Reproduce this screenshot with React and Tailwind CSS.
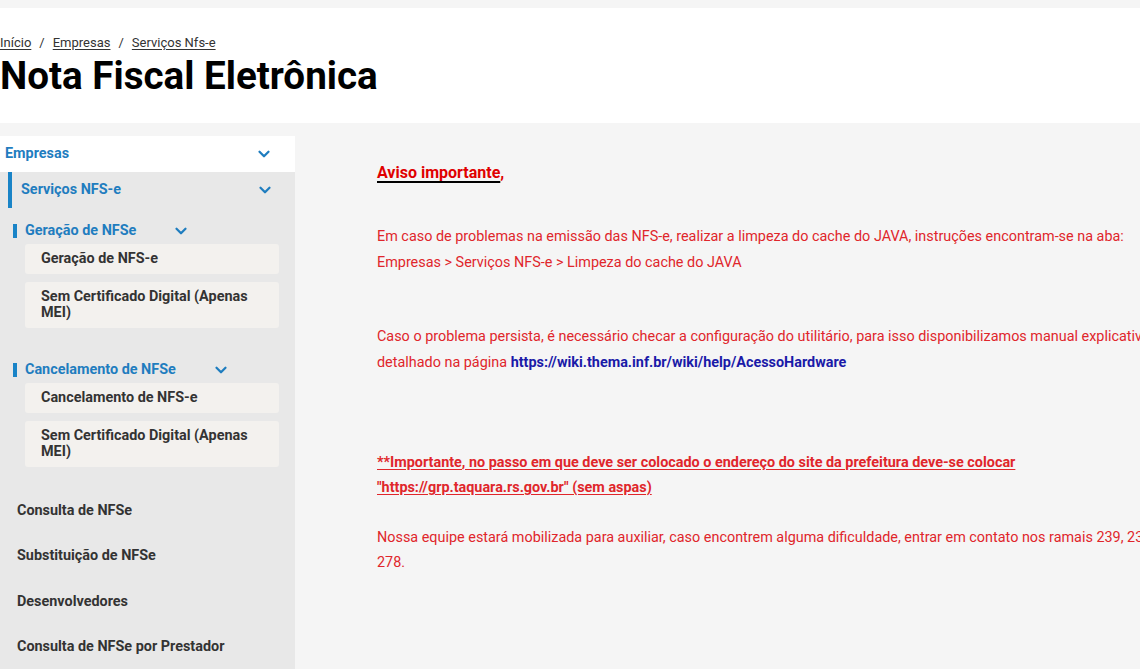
import { ChevronDown } from 'lucide-react';

const blue = 'text-[#1f7dbf]';

function Chevron({ className = '' }) {
  return <ChevronDown size={18} strokeWidth={3} className={`text-[#1f7dbf] ${className}`} />;
}

function SubGroup({ title, items }) {
  return (
    <div>
      <div className="ml-[13px] flex h-[18px] items-center">
        <span className="h-[14px] w-[4px] bg-[#1a84c7]" />
        <span className={`ml-[8px] text-[14.4px] font-bold ${blue}`}>{title}</span>
        <Chevron className="ml-[36px]" />
      </div>
      <div className="ml-[25px] mt-[4px] flex w-[254px] flex-col gap-[8px]">
        {items.map((label) => (
          <div key={label} className="rounded-[3px] bg-[#f3f1ee] py-[7px] pl-[16px] pr-[20px] text-[14.4px] font-bold leading-[16px] text-[#333]">
            {label}
          </div>
        ))}
      </div>
    </div>
  );
}

function Sidebar() {
  const links = ['Consulta de NFSe', 'Substituição de NFSe', 'Desenvolvedores', 'Consulta de NFSe por Prestador'];
  return (
    <aside className="w-[295px] shrink-0">
      <div className="flex h-[36px] items-center justify-between bg-white pl-[5px] pr-[22px]">
        <span className={`text-[14.4px] font-bold ${blue}`}>Empresas</span>
        <Chevron />
      </div>
      <div className="bg-[#e8e8e8] pb-[4px]">
        <div className="ml-[8px] flex h-[36px] items-center justify-between border-l-4 border-[#1a84c7] pl-[9px] pr-[21px]">
          <span className={`text-[14.4px] font-bold ${blue}`}>Serviços NFS-e</span>
          <Chevron />
        </div>
        <div className="mt-[14px]">
          <SubGroup title="Geração de NFSe" items={['Geração de NFS-e', 'Sem Certificado Digital (Apenas MEI)']} />
        </div>
        <div className="mt-[33px]">
          <SubGroup title="Cancelamento de NFSe" items={['Cancelamento de NFS-e', 'Sem Certificado Digital (Apenas MEI)']} />
        </div>
        <div className="mt-[21px]">
          {links.map((label) => (
            <div key={label} className="flex h-[45.5px] items-center pl-[17px] text-[14.4px] font-bold text-[#333]">
              {label}
            </div>
          ))}
        </div>
      </div>
    </aside>
  );
}

export default function App() {
  return (
    <div className="h-[669px] w-[1140px] overflow-hidden bg-[#f5f5f5] font-['Roboto',sans-serif]">
      <div className="h-[8px]" />
      <header className="h-[115px] bg-white pt-[25px]">
        <nav className="flex items-center gap-[8px] text-[13px] text-[#333]">
          <a className="underline underline-offset-2">Início</a>
          <span>/</span>
          <a className="underline underline-offset-2">Empresas</a>
          <span>/</span>
          <a className="underline underline-offset-2">Serviços Nfs-e</a>
        </nav>
        <h1 className="mt-[1px] text-[38.6px] font-bold leading-[44px] text-black">Nota Fiscal Eletrônica</h1>
      </header>

      <div className="flex pt-[13px]">
        <Sidebar />
        <main className="w-[890px] shrink-0 pl-[82px] pt-[24px] text-[14.4px] text-[#e0262b]">
          <p className="text-[16px] font-bold leading-[26px] text-[#e00000]">
            <span className="underline decoration-black decoration-2 underline-offset-[3px]">Aviso importante</span>,
          </p>
          <p className="mt-[38px] leading-[26px]">
            Em caso de problemas na emissão das NFS-e, realizar a limpeza do cache do JAVA, instruções encontram-se na aba:
            <br />
            Empresas &gt; Serviços NFS-e &gt; Limpeza do cache do JAVA
          </p>
          <p className="mt-[48px] leading-[26px]">
            Caso o problema persista, é necessário checar a configuração do utilitário, para isso disponibilizamos manual explicativo detalhado na página{' '}
            <a className="font-bold text-[#1a1aa8]">https://wiki.thema.inf.br/wiki/help/AcessoHardware</a>
          </p>
          <p className="mt-[74px] font-bold leading-[25px] underline underline-offset-2">
            **Importante, no passo em que deve ser colocado o endereço do site da prefeitura deve-se colocar "https://grp.taquara.rs.gov.br" (sem aspas)
          </p>
          <p className="mt-[25px] leading-[25px]">
            Nossa equipe estará mobilizada para auxiliar, caso encontrem alguma dificuldade, entrar em contato nos ramais 239, 237 e 278.
          </p>
        </main>
      </div>
    </div>
  );
}
